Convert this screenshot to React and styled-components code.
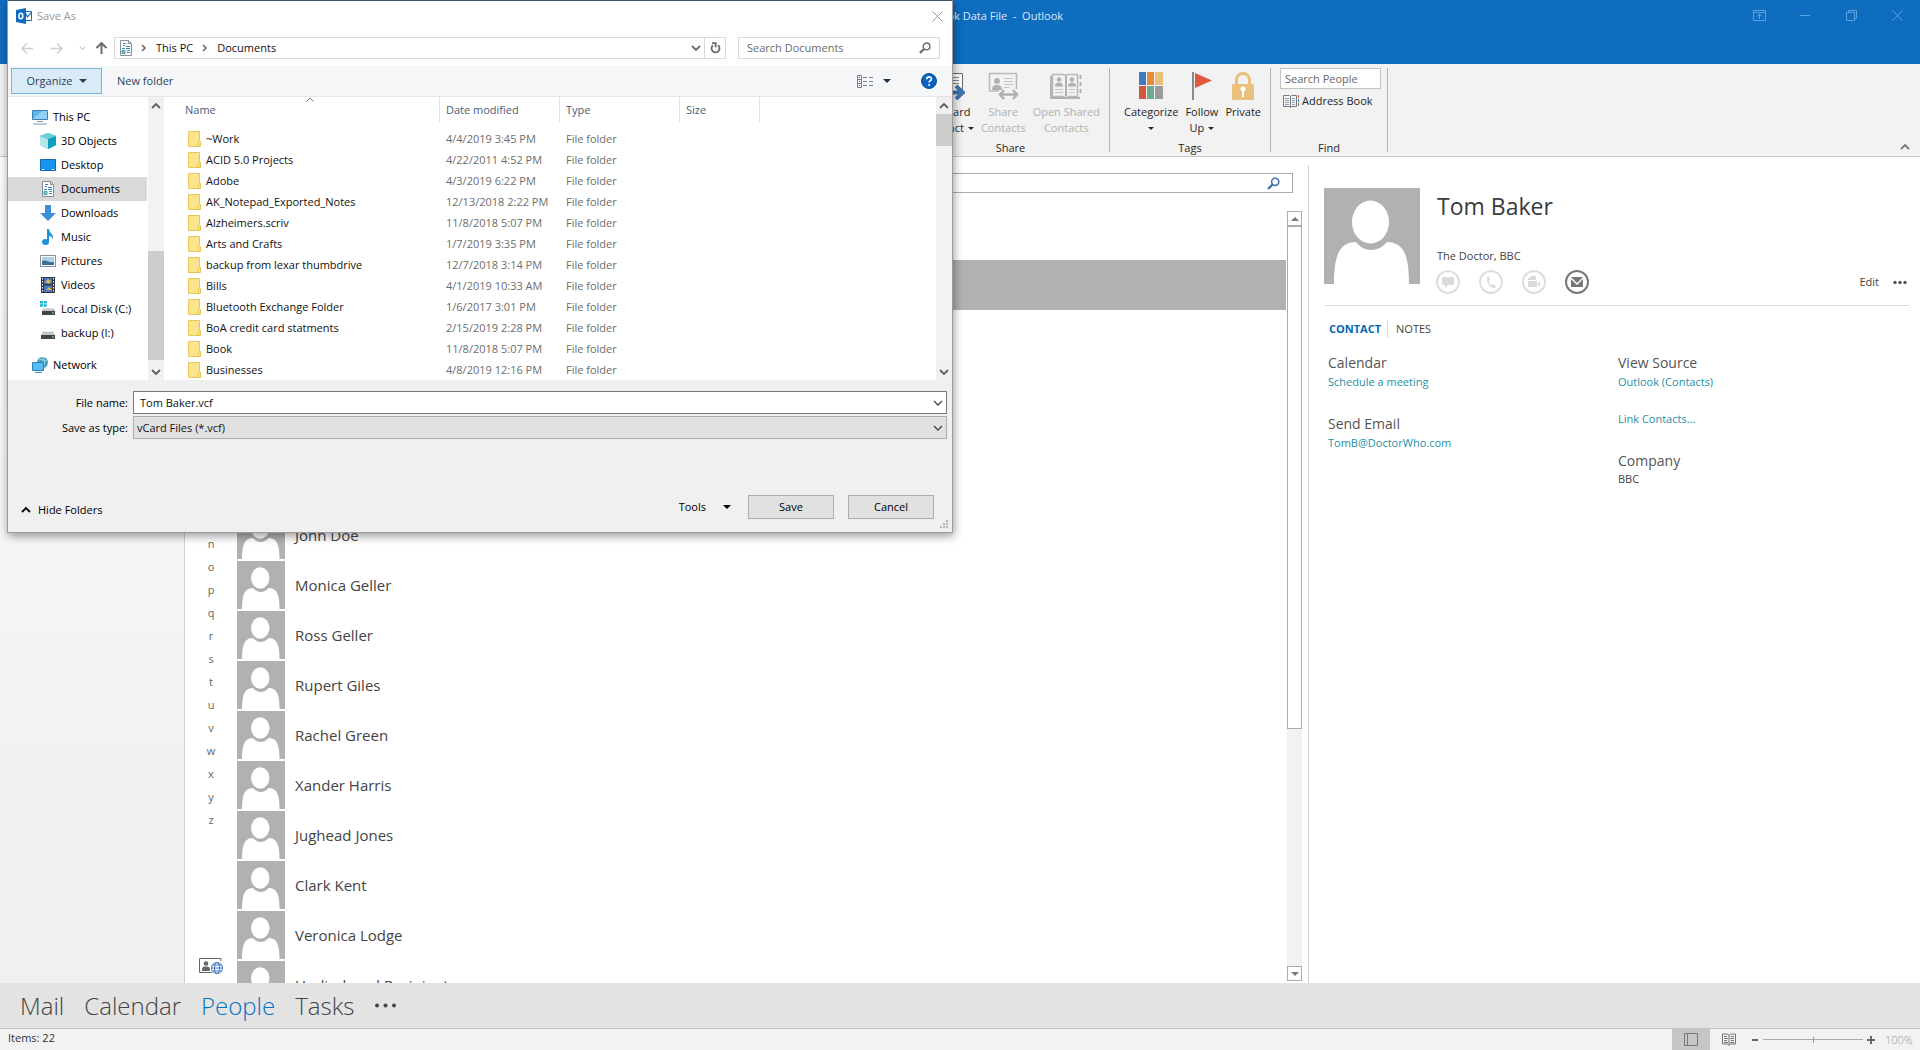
import React from "react";
import styled, { createGlobalStyle } from "styled-components";

const GlobalStyle = createGlobalStyle`
    * {
        box-sizing: border-box;
    }

    body {
        margin: 0;
        overflow: hidden;
        background-color: #fff;
        color: #262626;
        font-family: "Open Sans", "Noto Sans", sans-serif;
        font-size: 11px;
        line-height: 16px;
    }

    button, input, select {
        font: inherit;
        color: inherit;
        margin: 0;
        padding: 0;
        border: 0;
        border-radius: 0;
        background: none;
        outline: none;
    }

    svg {
        display: block;
        flex: none;
    }

    ul, h1, h2, p {
        margin: 0;
        padding: 0;
        font-weight: normal;
        list-style: none;
    }
`;

/* ---------- window ---------- */

const Window = styled.div`
    position: relative;
    height: 100vh;
    display: flex;
    flex-direction: column;
    overflow: hidden;
`;

const TitleBar = styled.header`
    flex: none;
    height: 64px;
    background-color: #0f6dbf;
    display: grid;
    grid-template-columns: 1fr auto 1fr;
    align-items: start;
    color: #d7eafa;
`;

const WindowTitle = styled.h1`
    grid-column: 2;
    padding-left: 8px;
    font-size: 11px;
    line-height: 32px;
    white-space: pre;
`;

const WindowButtons = styled.div`
    display: flex;
    justify-content: flex-end;
    color: #5ba2de;
`;

const WindowButton = styled.button`
    width: 46px;
    height: 30px;
    display: flex;
    align-items: center;
    justify-content: center;
`;

/* ---------- ribbon ---------- */

const Ribbon = styled.div`
    flex: none;
    height: 93px;
    padding-left: 912px;
    display: flex;
    background-color: #f2f2f2;
    border-bottom: 1px solid #c8c8c8;
    color: #262626;
`;

const RibbonGroup = styled.section`
    display: flex;
    flex-direction: column;
    justify-content: space-between;
    margin: 4px 0;
    padding: 0 9px;
    width: ${(props) => props.$width};
    border-right: 1px solid #b5b5b5;
`;

const GroupTitle = styled.h2`
    font-size: 11px;
    line-height: 16px;
    margin-bottom: -4px;
    text-align: center;
`;

const GroupItems = styled.div`
    display: flex;
    justify-content: flex-end;
    gap: 7px;
`;

const RibbonButton = styled.button`
    display: flex;
    flex-direction: column;
    align-items: center;
    padding-top: 4px;
    white-space: nowrap;
    color: ${(props) => (props.disabled ? "#b1b1b1" : "#262626")};

    & > svg {
        margin-bottom: 4px;
    }
`;

const LabelLine = styled.span`
    display: flex;
    align-items: center;
    gap: 4px;
    height: 16px;
`;

const FindItems = styled.div`
    display: flex;
    flex-direction: column;
    gap: 4px;
`;

const PeopleSearch = styled.input`
    width: 101px;
    height: 21px;
    padding: 0 4px;
    background-color: #fff;
    border: 1px solid #c3c3c3;

    &::placeholder {
        color: #666;
        opacity: 1;
    }
`;

const AddressButton = styled.button`
    display: flex;
    align-items: center;
    gap: 3px;
    padding-left: 3px;
    white-space: nowrap;
`;

const CollapseButton = styled.button`
    margin-left: auto;
    align-self: flex-end;
    padding: 5px 10px;
    color: #777;
`;

/* ---------- main area ---------- */

const Main = styled.main`
    flex: 1;
    min-height: 0;
    display: flex;
`;

const FolderPane = styled.aside`
    flex: none;
    width: 185px;
    border-right: 1px solid #d0d0d0;
    background: linear-gradient(#fdfdfd, #f0f0f0 80%);
`;

const PeoplePane = styled.section`
    flex: 1;
    min-width: 0;
    display: flex;
    flex-direction: column;
`;

const ContactSearch = styled.label`
    flex: none;
    height: 20px;
    margin: 16px 15px 17px 52px;
    padding: 0 12px 0 6px;
    display: flex;
    align-items: center;
    border: 1px solid #ababab;
    color: #4472ae;

    & input {
        flex: 1;
    }
`;

const PeopleBody = styled.div`
    flex: 1;
    min-height: 0;
    display: flex;
    padding-right: 6px;
`;

const Alphabet = styled.nav`
    flex: none;
    width: 52px;
    padding: 322px 0 9px;
    display: flex;
    flex-direction: column;
    align-items: center;
`;

const Letter = styled.button`
    height: 23px;
    color: #666;
`;

const SourceButton = styled.button`
    margin-top: auto;
`;

const ContactList = styled.ul`
    flex: 1;
    overflow: hidden;
`;

const ContactRow = styled.li`
    height: 50px;
    display: flex;
    align-items: center;
    gap: 10px;
    font-size: 15px;
    color: #444;
    background-color: ${(props) => (props.$selected ? "#b1b1b1" : "#fff")};
`;

/* ---------- scrollbars ---------- */

const Bar = styled.div`
    flex: none;
    width: ${(props) => (props.$outlined ? "15px" : "16px")};
    margin: ${(props) => (props.$outlined ? "1px 0 2px 1px" : "0")};
    display: flex;
    flex-direction: column;
    background-color: #f2f2f2;
`;

const BarButton = styled.button`
    flex: none;
    height: ${(props) => (props.$outlined ? "15px" : "17px")};
    display: flex;
    align-items: center;
    justify-content: center;
    color: ${(props) => (props.$outlined ? "#777" : "#606060")};
    background-color: ${(props) => (props.$outlined ? "#fff" : "#f0f0f0")};
    border: ${(props) => (props.$outlined ? "1px solid #ababab" : "0")};
`;

const BarTrack = styled.div`
    flex: 1;
`;

const BarThumb = styled.div`
    height: ${(props) => props.$size};
    background-color: ${(props) => (props.$outlined ? "#fff" : "#cdcdcd")};
    border: ${(props) => (props.$outlined ? "1px solid #ababab" : "0")};
`;

const BarGap = styled.div`
    height: ${(props) => props.$size};
`;

/* ---------- contact card ---------- */

const CardPane = styled.aside`
    flex: none;
    width: 612px;
    margin-top: 8px;
    padding: 23px 11px 0 15px;
    border-left: 1px solid #d0d0d0;
    color: #444;
`;

const CardHead = styled.div`
    display: flex;
    gap: 17px;
    padding-bottom: 11px;
    border-bottom: 1px solid #dcdcdc;
`;

const CardInfo = styled.div`
    flex: 1;
    display: flex;
    flex-direction: column;
`;

const CardName = styled.h2`
    font-size: 23px;
    line-height: 36px;
    color: #3b3b3b;
`;

const CardRole = styled.p`
    margin-top: 24px;
    line-height: 16px;
`;

const CardActions = styled.div`
    display: flex;
    align-items: center;
    gap: 19px;
    margin: 6px 0 0 -1px;
`;

const RoundButton = styled.button`
    width: 24px;
    height: 24px;
    display: flex;
    align-items: center;
    justify-content: center;
    border-radius: 50%;
    border: 2px solid ${(props) => (props.disabled ? "#dedede" : "#777")};
    color: ${(props) => (props.disabled ? "#dadada" : "#777")};
`;

const EditLinks = styled.div`
    display: flex;
    align-items: center;
    gap: 14px;
    margin-left: auto;
    padding-right: 2px;
`;

const CardTabs = styled.div`
    display: flex;
    margin: 14px 0 0 5px;
`;

const CardTab = styled.button`
    height: 18px;
    padding-right: 6px;
    color: ${(props) => (props.$active ? "#0067b0" : "#444")};
    font-weight: ${(props) => (props.$active ? 700 : 400)};

    & + & {
        padding-left: 8px;
        border-left: 1px solid #dcdcdc;
    }
`;

const CardColumns = styled.div`
    display: grid;
    grid-template-columns: 290px 1fr;
    margin: 15px 0 0 4px;
`;

const CardField = styled.section`
    margin-bottom: ${(props) => (props.$tight ? "20px" : "24px")};
`;

const FieldTitle = styled.h2`
    font-size: 14px;
    line-height: 20px;
    color: #555;
`;

const FieldLink = styled.a`
    display: block;
    line-height: 17px;
    text-decoration: none;
    color: #1f8fa6;
`;

/* ---------- bottom bars ---------- */

const NavBar = styled.nav`
    flex: none;
    height: 45px;
    padding: 0 20px;
    display: flex;
    align-items: center;
    gap: 20px;
    background-color: #e3e3e3;
`;

const NavItem = styled.a`
    font-size: 24px;
    line-height: 44px;
    font-weight: 300;
    text-decoration: none;
    color: ${(props) => (props.$active ? "#0072c6" : "#444")};
`;

const StatusBar = styled.footer`
    flex: none;
    height: 22px;
    padding-right: 7px;
    display: flex;
    align-items: center;
    background-color: #f2f2f2;
    border-top: 1px solid #c3c3c3;
    color: #777;
`;

const ItemCount = styled.span`
    margin: 0 auto 3px 8px;
    line-height: 16px;
    color: #333;
`;

const ViewButton = styled.button`
    width: 38px;
    height: 21px;
    display: flex;
    align-items: center;
    justify-content: center;
    background-color: ${(props) => (props.$active ? "#c6c6c6" : "transparent")};
`;

const ZoomControl = styled.div`
    display: flex;
    align-items: center;
    gap: 4px;
    margin-left: 4px;
`;

const ZoomSlider = styled.input`
    appearance: none;
    width: 100px;
    height: 6px;
    background: linear-gradient(#ababab, #ababab) center / 100% 1px no-repeat;

    &::-webkit-slider-thumb {
        appearance: none;
        width: 1px;
        height: 6px;
        background-color: #999;
    }
`;

const ZoomValue = styled.output`
    margin-left: 6px;
    width: 28px;
    font-weight: 300;
    color: #999;
`;

/* ---------- save dialog ---------- */

const Dialog = styled.div`
    position: absolute;
    top: 0;
    left: 7px;
    width: 946px;
    display: flex;
    flex-direction: column;
    background-color: #fff;
    border: 1px solid #9b9b9b;
    border-top-color: #44586b;
    box-shadow: 1px 3px 9px rgba(0, 0, 0, 0.4);
    color: #000;
`;

const DialogTitle = styled.div`
    display: flex;
    align-items: center;
    gap: 5px;
    height: 30px;
    padding: 0 9px 0 8px;
    color: #999;

    & button {
        margin-left: auto;
    }
`;

const AddressRow = styled.div`
    display: flex;
    align-items: center;
    padding: 6px 12px 7px 13px;
`;

const ArrowButton = styled.button`
    width: ${(props) => props.$width || "29px"};
    display: flex;
    color: ${(props) => (props.disabled ? "#cfcfcf" : "#6b6b6b")};
`;

const AddressBox = styled.div`
    flex: 1;
    height: 22px;
    padding-left: 3px;
    display: flex;
    align-items: center;
    border: 1px solid #d9d9d9;
    color: #6b6b6b;

    & > svg:first-child {
        margin-right: 7px;
    }
`;

const Crumb = styled.button`
    padding: 0 9px;
    color: #111;
`;

const HistoryButton = styled.button`
    margin-left: auto;
    padding-right: 3px;
`;

const RefreshButton = styled.button`
    width: 21px;
    height: 20px;
    display: flex;
    align-items: center;
    justify-content: center;
    border-left: 1px solid #d9d9d9;
`;

const DocumentSearch = styled.label`
    width: 202px;
    height: 22px;
    margin-left: 12px;
    padding: 0 8px;
    display: flex;
    align-items: center;
    border: 1px solid #d9d9d9;
    color: #6b6b6b;

    & input {
        flex: 1;
        min-width: 0;
    }

    & input::placeholder {
        color: #6b6b6b;
        opacity: 1;
    }
`;

const CommandBar = styled.div`
    display: flex;
    align-items: center;
    height: 31px;
    padding: 0 15px 0 3px;
    background-color: #f4f6f8;
    border-bottom: 1px solid #e4e7ea;
    color: #2b3f60;
`;

const OrganizeButton = styled.button`
    width: 91px;
    height: 26px;
    margin-right: 15px;
    display: flex;
    align-items: center;
    justify-content: center;
    gap: 6px;
    background-color: #d9ebf6;
    border: 1px solid #78b7d3;
`;

const ViewMenuButton = styled.button`
    display: flex;
    align-items: center;
    gap: 10px;
    margin: 0 30px 0 auto;
    color: #1e2f4a;
`;

const Browser = styled.div`
    height: 283px;
    display: flex;
    overflow: hidden;
`;

const Tree = styled.ul`
    width: 140px;
    padding: 8px 1px 0 0;
`;

const TreeItem = styled.li`
    height: 24px;
    margin-top: ${(props) => (props.$spaced ? "8px" : "0")};
    padding-left: ${(props) => (props.$root ? "24px" : "32px")};
    display: flex;
    align-items: center;
    gap: 5px;
    white-space: nowrap;
    background-color: ${(props) => (props.$selected ? "#d9d9d9" : "transparent")};
`;

const FilePane = styled.div`
    flex: 1;
    min-width: 0;
`;

const FileTable = styled.table`
    width: 100%;
    table-layout: fixed;
    border-collapse: separate;
    border-spacing: 0;

    & tbody::before {
        content: "";
        display: block;
        height: 6px;
    }
`;

const HeadCell = styled.th`
    position: relative;
    width: ${(props) => props.$width};
    height: 25px;
    padding: 0 0 0 ${(props) => (props.$sorted ? "21px" : "6px")};
    border-right: ${(props) => (props.$width ? "1px solid #e2e2e2" : "0")};
    font-weight: normal;
    text-align: left;
    color: #4c607a;

    & svg {
        position: absolute;
        top: 0;
        left: 142px;
    }
`;

const FileCell = styled.td`
    height: 21px;
    padding: 0 0 0 6px;
    color: #6d6d6d;
    white-space: nowrap;
`;

const FileName = styled.div`
    display: flex;
    align-items: center;
    gap: 5px;
    padding-left: 18px;
    color: #111;
`;

const SaveForm = styled.form`
    display: flex;
    flex-direction: column;
    height: 152px;
    padding: 11px 5px 13px 9px;
    background-color: #f0f0f0;
`;

const Field = styled.div`
    display: flex;
    align-items: center;
    margin-bottom: 2px;
`;

const FieldLabel = styled.label`
    width: 111px;
    text-align: right;
`;

const ComboBox = styled.div`
    flex: 1;
    height: 23px;
    margin-left: 5px;
    padding-right: 3px;
    display: flex;
    align-items: center;
    background-color: ${(props) => (props.$shaded ? "#e1e1e1" : "#fff")};
    border: 1px solid ${(props) => (props.$shaded ? "#adadad" : "#7a7a7a")};
    color: #444;

    & input, & select {
        flex: 1;
        appearance: none;
        padding-left: ${(props) => (props.$shaded ? "3px" : "6px")};
        color: #111;
    }
`;

const FormActions = styled.div`
    display: flex;
    align-items: flex-end;
    margin-top: auto;
    padding-right: 13px;
`;

const HideButton = styled.button`
    display: flex;
    align-items: center;
    gap: 7px;
    height: 18px;
    margin: 0 auto 0 4px;
`;

const ToolsButton = styled.button`
    display: flex;
    align-items: center;
    gap: 17px;
    height: 24px;
    margin-right: 3px;
`;

const PushButton = styled.button`
    width: 86px;
    height: 24px;
    margin-left: 14px;
    background-color: #e1e1e1;
    border: 1px solid #adadad;
`;

const Grip = styled.svg`
    position: absolute;
    right: 3px;
    bottom: 3px;
`;

/* ---------- icons ---------- */

const Caret = ({ up, size = 8 }) => (
    <svg width={size} height={size / 2} viewBox="0 0 8 4">
        <path d={up ? "M0 4h8L4 0z" : "M0 0h8L4 4z"} fill="currentColor" />
    </svg>
);

const chevrons = {
    up: "M1 6l4-4 4 4",
    down: "M1 2l4 4 4-4",
};

const Chevron = ({ dir = "down", weight = 1.8, width = 10 }) => (
    <svg width={width} height="8" viewBox="0 0 10 8" fill="none" stroke="currentColor" strokeWidth={weight}>
        <path d={chevrons[dir]} />
    </svg>
);

const CrumbChevron = () => (
    <svg width="6" height="8" viewBox="0 0 6 8" fill="none" stroke="currentColor" strokeWidth="1.6">
        <path d="M1 1l3 3-3 3" />
    </svg>
);

const Arrow = ({ turn = 0 }) => (
    <svg width="13" height="13" viewBox="0 0 13 13" fill="none" stroke="currentColor" strokeWidth={turn === 90 ? 2 : 1.5}>
        <path d="M12 6.500H1.500M6 1.500l-5 5 5 5" transform={`rotate(${turn} 6.500 6.500)`} />
    </svg>
);

const Magnifier = ({ size = 13, weight = 2 }) => (
    <svg width={size} height={size} viewBox="0 0 13 13" fill="none" stroke="currentColor">
        <circle cx="8.200" cy="4.800" r="3.600" strokeWidth={weight * 0.8} />
        <path d="M5.500 7.500L1 12" strokeWidth={weight * 1.2} />
    </svg>
);

const Cross = ({ size = 11 }) => (
    <svg width={size} height={size} viewBox="0 0 11 11" fill="none" stroke="currentColor">
        <path d="M.5.5l10 10M10.500.5l-10 10" />
    </svg>
);

const Dots = ({ width = 14, color = "#555" }) => (
    <svg width={width} height="5" viewBox={`0 0 ${width} 5`} fill={color}>
        <circle cx="2" cy="2.500" r={width > 16 ? 2 : 1.700} />
        <circle cx={width / 2} cy="2.500" r={width > 16 ? 2 : 1.700} />
        <circle cx={width - 2} cy="2.500" r={width > 16 ? 2 : 1.700} />
    </svg>
);

const Avatar = ({ size }) => (
    <svg width={size} height={size} viewBox="0 0 96 96">
        <rect width="96" height="96" fill="#b1b1b1" />
        <ellipse cx="46.500" cy="34" rx="18.500" ry="21.500" fill="#fff" />
        <path
            d="M10 96c0-17 2-28 6-34 3-5 9-8 16-8 4 5 9 8 15 8s12-3 16-8c7 0 13 3 16 8 4 6 6 17 6 34z"
            fill="#fff"
        />
    </svg>
);

const OutlookIcon = () => (
    <svg width="16" height="16" viewBox="0 0 16 16">
        <path d="M9 3.500h6.500v9H9z" fill="#fff" stroke="#0f6dbf" />
        <path d="M9.500 5.500l2 3.500 4-5" fill="none" stroke="#0f6dbf" strokeWidth="1.200" />
        <path d="M0 2l10-2v16L0 14z" fill="#0f6dbf" />
        <ellipse cx="4.800" cy="8" rx="2" ry="2.700" fill="none" stroke="#fff" strokeWidth="1.500" />
    </svg>
);

const DocumentIcon = () => (
    <svg width="16" height="16" viewBox="0 0 16 16">
        <path d="M2.500.5h8l3 3v12h-11z" fill="#fafafa" stroke="#8a8f94" />
        <path d="M10.500.5v3h3" fill="none" stroke="#8a8f94" />
        <path d="M5 5.500h2M5 3.500h3M8 6.500h4M4 8.500h3M8 8.500h4M9 12.500h3" stroke="#2f87c4" />
        <path d="M4 10.500h3v3H4zM9 10.500h3" stroke="#4aa3a0" fill="#7fc4d6" />
    </svg>
);

const FolderIcon = () => (
    <svg width="13" height="16" viewBox="0 0 13 16">
        <path d="M.5.5h11v9l1 1v5H.5z" fill="#fbe48c" stroke="#e3c65c" />
        <path d="M10.500 15.500v-5l1-1" fill="none" stroke="#e3c65c" />
    </svg>
);

const ContactForwardIcon = () => (
    <svg width="32" height="28" viewBox="0 0 32 28" fill="none">
        <path d="M2.500 1.500h27v18h-27z" fill="#fff" stroke="#6b6b6b" />
        <path d="M16 5.500h10M16 8.500h10M16 11.500h10" stroke="#8a8a8a" />
        <path d="M14 20.500h15M23 14l7 6.500-7 6.500" stroke="#3e74b1" strokeWidth="4" />
    </svg>
);

const ShareContactsIcon = () => (
    <svg width="32" height="28" viewBox="0 0 32 28" fill="none">
        <path d="M2.500 19V1.500h27V17M2.500 19H12" stroke="#b9b9b9" strokeWidth="1.500" />
        <path d="M17 6.500h9M17 9.500h9M17 12.500h9M17 15.500h5" stroke="#c4c4c4" />
        <circle cx="10" cy="9" r="3" fill="#b1b1b1" />
        <path d="M5 18c0-4 2-5 5-5s5 1 5 5z" fill="#b1b1b1" />
        <path d="M14 22.500h15M17 18l-4 4.500 4 4.500M26 18l4 4.500-4 4.500" stroke="#b1b1b1" strokeWidth="2.500" />
    </svg>
);

const OpenSharedIcon = () => (
    <svg width="32" height="28" viewBox="0 0 32 28" fill="none">
        <path d="M2.500 2.500h11c1.500 0 2.500 1 2.500 2 0-1 1-2 2.500-2h9v22h-9L16 26l-2.500-1.500h-11z" stroke="#b9b9b9" strokeWidth="1.500" />
        <path d="M1 4v22h29M16 4v20" stroke="#b1b1b1" strokeWidth="2" />
        <path d="M30.500 3v4M30.500 10v4M30.500 17v4" stroke="#b1b1b1" strokeWidth="2" />
        <path d="M5 17.500h8M5 20.500h8M19 17.500h6M19 20.500h6" stroke="#c4c4c4" />
        <circle cx="9" cy="7.500" r="2.300" fill="#b1b1b1" />
        <circle cx="22" cy="7.500" r="2.300" fill="#b1b1b1" />
        <path d="M5 14.500c0-3 1.500-4 4-4s4 1 4 4zM18 14.500c0-3 1.500-4 4-4s4 1 4 4z" fill="#b1b1b1" />
    </svg>
);

const CategorizeIcon = () => (
    <svg width="24" height="28" viewBox="0 0 24 28">
        <path d="M0 0h7v13H0z" fill="#3e7ac0" />
        <path d="M8 0h7v13H8z" fill="#e58b3c" />
        <path d="M16 0h8v13h-8z" fill="#e9c17c" />
        <path d="M0 14h7v13H0z" fill="#d2553c" />
        <path d="M8 14h7v13H8z" fill="#6faa8e" />
        <path d="M16 14h8v13h-8z" fill="#9b9b9b" />
    </svg>
);

const FlagIcon = () => (
    <svg width="20" height="28" viewBox="0 0 20 28">
        <path d="M0 0h2v28H0z" fill="#8a8a8a" />
        <path d="M3 1l17 7.500L3 16z" fill="#e0593c" />
    </svg>
);

const LockIcon = () => (
    <svg width="22" height="28" viewBox="0 0 22 28">
        <path d="M4.500 13V8a6.500 6.500 0 0 1 13 0v5" fill="none" stroke="#e9c17c" strokeWidth="3" />
        <rect y="12" width="22" height="16" rx="1.500" fill="#e9c17c" />
        <circle cx="11" cy="17" r="2.500" fill="#fff" />
        <path d="M10 18h2v7h-2z" fill="#fff" />
    </svg>
);

const AddressBookIcon = () => (
    <svg width="16" height="14" viewBox="0 0 16 14" fill="none">
        <path d="M.5 1.500h6l1 1 1-1h5v11h-5l-1 1-1-1h-6zM7.500 2.500v11" stroke="#7a7a7a" />
        <path d="M2 4.500h4M2 6.500h4M2 8.500h4M9 4.500h3M9 6.500h3M9 8.500h3M2 10.500h4M9 10.500h3" stroke="#8fa3bb" />
        <path d="M15.500 1v3" stroke="#d2553c" />
        <path d="M15.500 5v3" stroke="#3e7ac0" />
        <path d="M15.500 9v3" stroke="#777" />
    </svg>
);

const RibbonOptionsIcon = () => (
    <svg width="13" height="11" viewBox="0 0 13 11" fill="none" stroke="currentColor">
        <path d="M.5.5h12v10H.5zM.5 2.500h12M6.500 9V4M4 6.500L6.500 4 9 6.500" />
    </svg>
);

const RestoreIcon = () => (
    <svg width="11" height="11" viewBox="0 0 11 11" fill="none" stroke="currentColor">
        <path d="M.5 2.500h8v8h-8zM2.500 2.500v-2h8v8h-2" />
    </svg>
);

const MinimizeIcon = () => (
    <svg width="10" height="11" viewBox="0 0 10 11" stroke="currentColor">
        <path d="M0 5.500h10" />
    </svg>
);

const ContactSourceIcon = () => (
    <svg width="24" height="16" viewBox="0 0 24 16" fill="none">
        <path d="M22 3V.5H.5v14H13" stroke="#666" />
        <circle cx="7" cy="5.500" r="2.300" fill="#666" />
        <path d="M3 13c0-4 1-4.500 4-4.500s4 .5 4 4.500z" fill="#666" />
        <g stroke="#3e7ac0">
            <circle cx="18" cy="10" r="5.500" fill="#fff" />
            <ellipse cx="18" cy="10" rx="2.500" ry="5.500" />
            <path d="M12.500 10h11M13.500 7h9M13.500 13h9" />
        </g>
    </svg>
);

const HelpIcon = () => (
    <svg width="16" height="16" viewBox="0 0 16 16">
        <circle cx="8" cy="8" r="7.500" fill="#0a63c0" stroke="#084d96" />
        <path d="M5.800 6.200c0-3 4.600-3 4.600-.3 0 1.800-2.300 1.800-2.300 3.700" fill="none" stroke="#fff" strokeWidth="1.600" />
        <circle cx="8.100" cy="12" r="1" fill="#fff" />
    </svg>
);

const ViewListIcon = () => (
    <svg width="16" height="13" viewBox="0 0 16 13" fill="none" stroke="#7c8087">
        <path d="M.5.5h4v12h-4zM.5 4.500h4M.5 8.500h4" />
        <path d="M6 2.500h4M12 2.500h4M6 6.500h4M12 6.500h4M6 10.500h4M12 10.500h4" />
        <path d="M2 2.500h1M2 6.500h1M2 10.500h1" stroke="#3e7ac0" />
    </svg>
);

const RefreshIcon = () => (
    <svg width="11" height="12" viewBox="0 0 11 12" fill="none" stroke="currentColor" strokeWidth="1.800">
        <path d="M8 3.200a4 4 0 1 1-5 0" />
        <path d="M2 1.200h3.700v4" />
    </svg>
);

const ReadingIcon = () => (
    <svg width="14" height="13" viewBox="0 0 14 13" fill="none" stroke="currentColor">
        <path d="M.5 1v10h5l1.500 1.500L8.500 11h5V1h-5L7 2.500 5.500 1zM7 2v10" />
        <path d="M2 3.500h3M2 5.500h4M2 7.500h3M2 9.500h4M9 3.500h3M8 5.500h4M9 7.500h3M8 9.500h4" />
    </svg>
);

const NormalIcon = () => (
    <svg width="14" height="13" viewBox="0 0 14 13" fill="none" stroke="currentColor">
        <path d="M.5.5h13v12H.5zM3.500.5v12" />
    </svg>
);

const treeIcons = {
    pc: (
        <>
            <path d="M.5 1.500h15v9H.5z" fill="#5db8f0" stroke="#3b7fb4" />
            <path d="M1 10l9-8h5v8z" fill="#8fd0f7" />
            <path d="M5 12.500h6M1 15h14" stroke="#7a98ab" />
        </>
    ),
    cube: (
        <>
            <path d="M8 0l8 3v9l-8 4-8-4V3z" fill="#2bb3c8" />
            <path d="M0 3l8 3v10l-8-4z" fill="#b5e6ea" />
            <path d="M8 6l8-3v9l-8 4z" fill="#0f9ebc" />
            <path d="M0 3l8-3 8 3-8 3z" fill="#6fd0da" />
        </>
    ),
    desktop: (
        <>
            <path d="M.5 2.500h15v11H.5z" fill="#1793f0" stroke="#0d6cb8" />
            <path d="M2 12.500h2M12 12.500h2" stroke="#fff" />
        </>
    ),
    download: <path d="M5 0h6v8h5l-8 8-8-8h5z" fill="#3a8fd6" />,
    music: (
        <>
            <ellipse cx="5.500" cy="13" rx="3.500" ry="3" fill="#1c93dc" />
            <path d="M7 0h2c0 4 5 5 4 10-1-2-2-3-4-3v6H7z" fill="#1c93dc" />
        </>
    ),
    picture: (
        <>
            <path d="M.5 2.500h15v11H.5z" fill="#fff" stroke="#8a8f94" />
            <path d="M2 4h12v8H2z" fill="#a9d0ec" />
            <path d="M2 8c4-2 6 2 12 1v3H2z" fill="#3f6e92" />
        </>
    ),
    video: (
        <>
            <path d="M1 0h14v16H1z" fill="#33373d" />
            <path d="M4 1h8v6H4zM4 8.500h8V15H4z" fill="#4d74c8" />
            <path d="M5 5l3-3 3 2-2 3zM6 13l3-3 3 3z" fill="#d0b848" />
            <path d="M2.500 1v14M13.500 1v14" stroke="#fff" strokeDasharray="1.500 1.500" />
        </>
    ),
    system: (
        <>
            <path d="M0 0h3v2.500H0zM3.700 0h3v2.500h-3zM0 3.200h3v2.500H0zM3.700 3.200h3v2.500h-3z" fill="#19b5d8" />
            <path d="M3 7.500h11l1.500 3H2z" fill="#c2c5c6" />
            <path d="M2 10h13v4H2z" fill="#3f4546" />
            <path d="M12 12h2" stroke="#8ef08a" />
        </>
    ),
    drive: (
        <>
            <path d="M3 6.500h10l2 4H1z" fill="#c2c5c6" />
            <path d="M1 10h14v4H1z" fill="#3f4546" />
            <path d="M12 12h2" stroke="#8ef08a" />
        </>
    ),
    network: (
        <>
            <circle cx="10.500" cy="5.500" r="5.500" fill="#4f9fbf" />
            <path d="M7 3c3-2 4 2 8 0M10 0c3 3 3 6 1 10" stroke="#a8dbe4" fill="none" />
            <path d="M.5 5.500h11v8H.5z" fill="#56bdf2" stroke="#2d83b8" />
            <path d="M3 15.500h7" stroke="#4a90b8" />
        </>
    ),
};

const TreeIcon = ({ name }) =>
    name === "document" ? (
        <DocumentIcon />
    ) : (
        <svg width="16" height="16" viewBox="0 0 16 16">
            {treeIcons[name]}
        </svg>
    );

const cardIcons = {
    Message: "M1 2h12v8H7l-3 3v-3H1z",
    Call: "M4 1l2 3-1 2c0 2 1 3 3 4l2-1 2 3c-2 2-5 1-7-2S2 3 4 1z",
    Video: "M1 6h9v6H1zM10 9l3-3v6l-3-3zM3 1h6v4H3zM1 3h3v2H1z",
    Email: "M1 2h12L7 8zM1 4l6 6 6-6v8H1z",
};

/* ---------- data ---------- */

// rows without a name sit behind the dialog
const contacts = [
    {},
    { selected: true },
    {},
    {},
    {},
    {},
    { name: "John Doe" },
    { name: "Monica Geller" },
    { name: "Ross Geller" },
    { name: "Rupert Giles" },
    { name: "Rachel Green" },
    { name: "Xander Harris" },
    { name: "Jughead Jones" },
    { name: "Clark Kent" },
    { name: "Veronica Lodge" },
    { name: "Undisclosed Recipients" },
];

const letters = [..."nopqrstuvwxyz"];

const folders = [
    { icon: "pc", name: "This PC", root: true },
    { icon: "cube", name: "3D Objects" },
    { icon: "desktop", name: "Desktop" },
    { icon: "document", name: "Documents", selected: true },
    { icon: "download", name: "Downloads" },
    { icon: "music", name: "Music" },
    { icon: "picture", name: "Pictures" },
    { icon: "video", name: "Videos" },
    { icon: "system", name: "Local Disk (C:)" },
    { icon: "drive", name: "backup (I:)" },
    { icon: "network", name: "Network", root: true, spaced: true },
];

const files = [
    ["~Work", "4/4/2019 3:45 PM"],
    ["ACID 5.0 Projects", "4/22/2011 4:52 PM"],
    ["Adobe", "4/3/2019 6:22 PM"],
    ["AK_Notepad_Exported_Notes", "12/13/2018 2:22 PM"],
    ["Alzheimers.scriv", "11/8/2018 5:07 PM"],
    ["Arts and Crafts", "1/7/2019 3:35 PM"],
    ["backup from lexar thumbdrive", "12/7/2018 3:14 PM"],
    ["Bills", "4/1/2019 10:33 AM"],
    ["Bluetooth Exchange Folder", "1/6/2017 3:01 PM"],
    ["BoA credit card statments", "2/15/2019 2:28 PM"],
    ["Book", "11/8/2018 5:07 PM"],
    ["Businesses", "4/8/2019 12:16 PM"],
];

/* ---------- parts ---------- */

function ScrollBar({ outlined, offset = "0", size }) {
    return (
        <Bar $outlined={outlined}>
            <BarButton type="button" $outlined={outlined} aria-label="Scroll up">
                {outlined ? <Caret up /> : <Chevron dir="up" />}
            </BarButton>
            <BarTrack>
                <BarGap $size={offset} />
                <BarThumb $outlined={outlined} $size={size} />
            </BarTrack>
            <BarButton type="button" $outlined={outlined} aria-label="Scroll down">
                {outlined ? <Caret /> : <Chevron />}
            </BarButton>
        </Bar>
    );
}

function SaveDialog() {
    return (
        <Dialog role="dialog" aria-label="Save As">
            <DialogTitle>
                <OutlookIcon />
                Save As
                <button type="button" aria-label="Close dialog">
                    <Cross />
                </button>
            </DialogTitle>
            <AddressRow>
                <ArrowButton disabled aria-label="Back">
                    <Arrow />
                </ArrowButton>
                <ArrowButton disabled aria-label="Forward">
                    <Arrow turn={180} />
                </ArrowButton>
                <ArrowButton $width="16px" disabled aria-label="Recent locations">
                    <Chevron width={7} />
                </ArrowButton>
                <ArrowButton $width="19px" aria-label="Up">
                    <Arrow turn={90} />
                </ArrowButton>
                <AddressBox>
                    <DocumentIcon />
                    <CrumbChevron />
                    <Crumb>This PC</Crumb>
                    <CrumbChevron />
                    <Crumb>Documents</Crumb>
                    <HistoryButton aria-label="Previous locations">
                        <Chevron />
                    </HistoryButton>
                    <RefreshButton aria-label="Refresh">
                        <RefreshIcon />
                    </RefreshButton>
                </AddressBox>
                <DocumentSearch>
                    <input type="text" placeholder="Search Documents" aria-label="Search Documents" />
                    <Magnifier size={12} />
                </DocumentSearch>
            </AddressRow>
            <CommandBar>
                <OrganizeButton>
                    Organize
                    <Caret />
                </OrganizeButton>
                <button type="button">New folder</button>
                <ViewMenuButton aria-label="Change view">
                    <ViewListIcon />
                    <Caret />
                </ViewMenuButton>
                <button type="button" aria-label="Help">
                    <HelpIcon />
                </button>
            </CommandBar>
            <Browser>
                <Tree>
                    {folders.map((folder) => (
                        <TreeItem
                            key={folder.name}
                            $root={folder.root}
                            $selected={folder.selected}
                            $spaced={folder.spaced}
                        >
                            <TreeIcon name={folder.icon} />
                            {folder.name}
                        </TreeItem>
                    ))}
                </Tree>
                <ScrollBar offset="55%" size="44%" />
                <FilePane>
                    <FileTable>
                        <thead>
                            <tr>
                                <HeadCell $width="276px" $sorted>
                                    Name
                                    <svg width="8" height="5" viewBox="0 0 8 5" fill="none" stroke="#777">
                                        <path d="M.5 4.500L4 1l3.500 3.500" />
                                    </svg>
                                </HeadCell>
                                <HeadCell $width="120px">Date modified</HeadCell>
                                <HeadCell $width="120px">Type</HeadCell>
                                <HeadCell $width="80px">Size</HeadCell>
                                <HeadCell aria-hidden="true" />
                            </tr>
                        </thead>
                        <tbody>
                            {files.map(([name, date]) => (
                                <tr key={name}>
                                    <FileCell>
                                        <FileName>
                                            <FolderIcon />
                                            {name}
                                        </FileName>
                                    </FileCell>
                                    <FileCell>{date}</FileCell>
                                    <FileCell>File folder</FileCell>
                                    <FileCell />
                                    <FileCell />
                                </tr>
                            ))}
                        </tbody>
                    </FileTable>
                </FilePane>
                <ScrollBar size="13%" />
            </Browser>
            <SaveForm onSubmit={(e) => e.preventDefault()}>
                <Field>
                    <FieldLabel htmlFor="fileName">File name:</FieldLabel>
                    <ComboBox>
                        <input id="fileName" type="text" defaultValue="Tom Baker.vcf" />
                        <Chevron weight={1.3} />
                    </ComboBox>
                </Field>
                <Field>
                    <FieldLabel htmlFor="fileType">Save as type:</FieldLabel>
                    <ComboBox $shaded>
                        <select id="fileType">
                            <option>vCard Files (*.vcf)</option>
                        </select>
                        <Chevron weight={1.3} />
                    </ComboBox>
                </Field>
                <FormActions>
                    <HideButton type="button">
                        <Chevron dir="up" />
                        Hide Folders
                    </HideButton>
                    <ToolsButton type="button">
                        Tools
                        <Caret />
                    </ToolsButton>
                    <PushButton type="submit">Save</PushButton>
                    <PushButton type="button">Cancel</PushButton>
                </FormActions>
            </SaveForm>
            <Grip width="9" height="9" viewBox="0 0 9 9" fill="#b5b5b5">
                <path d="M6 0h2v2H6zM3 3h2v2H3zM6 3h2v2H6zM0 6h2v2H0zM3 6h2v2H3zM6 6h2v2H6z" />
            </Grip>
        </Dialog>
    );
}

function ContactCard() {
    return (
        <CardPane>
            <CardHead>
                <Avatar size={96} />
                <CardInfo>
                    <CardName>Tom Baker</CardName>
                    <CardRole>The Doctor, BBC</CardRole>
                    <CardActions>
                        {Object.keys(cardIcons).map((name) => (
                            <RoundButton key={name} disabled={name !== "Email"} aria-label={name}>
                                <svg width="14" height="14" viewBox="0 0 14 14">
                                    <path d={cardIcons[name]} fill="currentColor" />
                                </svg>
                            </RoundButton>
                        ))}
                        <EditLinks>
                            <button type="button">Edit</button>
                            <button type="button" aria-label="More actions">
                                <Dots />
                            </button>
                        </EditLinks>
                    </CardActions>
                </CardInfo>
            </CardHead>
            <CardTabs>
                <CardTab $active>CONTACT</CardTab>
                <CardTab>NOTES</CardTab>
            </CardTabs>
            <CardColumns>
                <div>
                    <CardField>
                        <FieldTitle>Calendar</FieldTitle>
                        <FieldLink href="#meeting">Schedule a meeting</FieldLink>
                    </CardField>
                    <CardField>
                        <FieldTitle>Send Email</FieldTitle>
                        <FieldLink href="#email">TomB@DoctorWho.com</FieldLink>
                    </CardField>
                </div>
                <div>
                    <CardField $tight>
                        <FieldTitle>View Source</FieldTitle>
                        <FieldLink href="#source">Outlook (Contacts)</FieldLink>
                    </CardField>
                    <CardField>
                        <FieldLink href="#link">Link Contacts...</FieldLink>
                    </CardField>
                    <CardField>
                        <FieldTitle>Company</FieldTitle>
                        <p>BBC</p>
                    </CardField>
                </div>
            </CardColumns>
        </CardPane>
    );
}

function App() {
    return (
        <Window>
            <GlobalStyle />
            <TitleBar>
                <WindowTitle>{"Contacts - Outlook Data File  -  Outlook"}</WindowTitle>
                <WindowButtons>
                    <WindowButton aria-label="Ribbon display options">
                        <RibbonOptionsIcon />
                    </WindowButton>
                    <WindowButton aria-label="Minimize">
                        <MinimizeIcon />
                    </WindowButton>
                    <WindowButton aria-label="Restore">
                        <RestoreIcon />
                    </WindowButton>
                    <WindowButton aria-label="Close">
                        <Cross />
                    </WindowButton>
                </WindowButtons>
            </TitleBar>

            <Ribbon>
                <RibbonGroup $width="198px">
                    <GroupItems>
                        <RibbonButton>
                            <ContactForwardIcon />
                            <LabelLine>Forward</LabelLine>
                            <LabelLine>
                                Contact <Caret size={6} />
                            </LabelLine>
                        </RibbonButton>
                        <RibbonButton disabled>
                            <ShareContactsIcon />
                            <LabelLine>Share</LabelLine>
                            <LabelLine>Contacts</LabelLine>
                        </RibbonButton>
                        <RibbonButton disabled>
                            <OpenSharedIcon />
                            <LabelLine>Open Shared</LabelLine>
                            <LabelLine>Contacts</LabelLine>
                        </RibbonButton>
                    </GroupItems>
                    <GroupTitle>Share</GroupTitle>
                </RibbonGroup>
                <RibbonGroup $width="161px">
                    <GroupItems>
                        <RibbonButton>
                            <CategorizeIcon />
                            <LabelLine>Categorize</LabelLine>
                            <LabelLine>
                                <Caret size={6} />
                            </LabelLine>
                        </RibbonButton>
                        <RibbonButton>
                            <FlagIcon />
                            <LabelLine>Follow</LabelLine>
                            <LabelLine>
                                Up <Caret size={6} />
                            </LabelLine>
                        </RibbonButton>
                        <RibbonButton>
                            <LockIcon />
                            <LabelLine>Private</LabelLine>
                        </RibbonButton>
                    </GroupItems>
                    <GroupTitle>Tags</GroupTitle>
                </RibbonGroup>
                <RibbonGroup $width="117px">
                    <FindItems>
                        <PeopleSearch type="text" placeholder="Search People" aria-label="Search People" />
                        <AddressButton>
                            <AddressBookIcon />
                            Address Book
                        </AddressButton>
                    </FindItems>
                    <GroupTitle>Find</GroupTitle>
                </RibbonGroup>
                <CollapseButton aria-label="Collapse the ribbon">
                    <Chevron dir="up" />
                </CollapseButton>
            </Ribbon>

            <Main>
                <FolderPane />
                <PeoplePane>
                    <ContactSearch>
                        <input type="text" aria-label="Search Contacts" />
                        <Magnifier />
                    </ContactSearch>
                    <PeopleBody>
                        <Alphabet>
                            {letters.map((letter) => (
                                <Letter key={letter}>{letter}</Letter>
                            ))}
                            <SourceButton aria-label="Contact sources">
                                <ContactSourceIcon />
                            </SourceButton>
                        </Alphabet>
                        <ContactList>
                            {contacts.map((contact, index) => (
                                <ContactRow key={index} $selected={contact.selected}>
                                    <Avatar size={48} />
                                    {contact.name}
                                </ContactRow>
                            ))}
                        </ContactList>
                        <ScrollBar outlined size="68%" />
                    </PeopleBody>
                </PeoplePane>
                <ContactCard />
            </Main>

            <NavBar>
                <NavItem href="#mail">Mail</NavItem>
                <NavItem href="#calendar">Calendar</NavItem>
                <NavItem href="#people" $active>
                    People
                </NavItem>
                <NavItem href="#tasks">Tasks</NavItem>
                <button type="button" aria-label="More">
                    <Dots width={21} color="#444" />
                </button>
            </NavBar>

            <StatusBar>
                <ItemCount>Items: 22</ItemCount>
                <ViewButton $active aria-label="Normal view">
                    <NormalIcon />
                </ViewButton>
                <ViewButton aria-label="Reading view">
                    <ReadingIcon />
                </ViewButton>
                <ZoomControl>
                    <button type="button" aria-label="Zoom out">
                        <svg width="7" height="8" viewBox="0 0 7 8" stroke="#666" strokeWidth="2">
                            <path d="M0 4h6" />
                        </svg>
                    </button>
                    <ZoomSlider type="range" min="0" max="200" defaultValue="100" aria-label="Zoom" />
                    <button type="button" aria-label="Zoom in">
                        <svg width="8" height="8" viewBox="0 0 8 8" stroke="#666" strokeWidth="2">
                            <path d="M0 4h8M4 0v8" />
                        </svg>
                    </button>
                    <ZoomValue>100%</ZoomValue>
                </ZoomControl>
            </StatusBar>

            <SaveDialog />
        </Window>
    );
}

export default App;
